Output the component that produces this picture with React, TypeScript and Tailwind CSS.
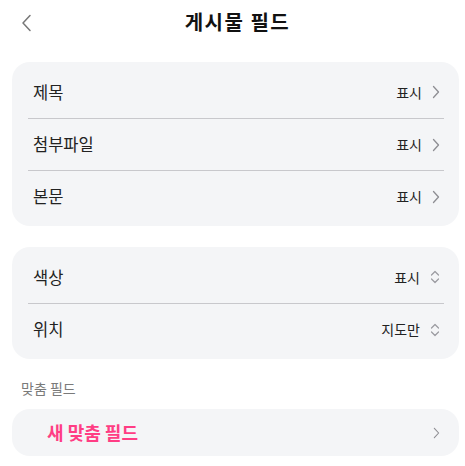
import React from 'react';

const font = { fontFamily: '"Noto Sans CJK KR", "Noto Sans", sans-serif' };

const ChevronRight: React.FC<{ className?: string }> = ({ className }) => (
  <svg viewBox="0 0 8 14" className={className} fill="none" stroke="currentColor" strokeWidth="1.3" strokeLinecap="round" strokeLinejoin="round">
    <path d="M1.5 1.5 L6.5 7 L1.5 12.5" />
  </svg>
);

const ChevronUpDown: React.FC = () => (
  <svg viewBox="0 0 10 14" className="w-[10px] h-[14px] text-[#9a9aa0]" fill="none" stroke="currentColor" strokeWidth="1.2" strokeLinecap="round" strokeLinejoin="round">
    <path d="M1.5 5 L5 1.5 L8.5 5" />
    <path d="M1.5 9 L5 12.5 L8.5 9" />
  </svg>
);

type Row = { label: string; value: string; kind: 'nav' | 'select' };

const Card: React.FC<{ rows: Row[] }> = ({ rows }) => (
  <div className="bg-[#f4f5f7] rounded-[18px] py-1 pl-4 pr-[15px]">
    {rows.map((r, i) => (
      <div
        key={r.label}
        className={`h-[52px] flex items-center justify-between pl-[5px] pr-[4px] ${i > 0 ? 'border-t border-[#c8c8cc]' : ''}`}
      >
        <span className="text-[16.5px] text-[#222]">{r.label}</span>
        <div className="flex items-center gap-[10px]">
          <span className="text-[14px] text-[#222]">{r.value}</span>
          {r.kind === 'nav' ? (
            <ChevronRight className="w-[8px] h-[14px] text-[#8e8e93]" />
          ) : (
            <ChevronUpDown />
          )}
        </div>
      </div>
    ))}
  </div>
);

export default function App() {
  return (
    <div className="w-[465px] h-[466px] bg-white pl-3 pr-[6px] overflow-hidden" style={font}>
      <header className="h-[44px] flex items-center justify-center relative">
        <svg viewBox="0 0 10 18" className="absolute left-[9px] top-[14px] w-[11px] h-[18px] text-[#777]" fill="none" stroke="currentColor" strokeWidth="1.5" strokeLinecap="round" strokeLinejoin="round">
          <path d="M8.5 1.5 L1.5 9 L8.5 16.5" />
        </svg>
        <h1 className="text-[20px] font-bold text-[#111] tracking-[1.5px] pl-[4px]">게시물 필드</h1>
      </header>
      <div className="mt-[18px]">
        <Card
          rows={[
            { label: '제목', value: '표시', kind: 'nav' },
            { label: '첨부파일', value: '표시', kind: 'nav' },
            { label: '본문', value: '표시', kind: 'nav' },
          ]}
        />
      </div>
      <div className="mt-[21px]">
        <Card
          rows={[
            { label: '색상', value: '표시', kind: 'select' },
            { label: '위치', value: '지도만', kind: 'select' },
          ]}
        />
      </div>
      <div className="mt-[20px] pl-[9px] text-[14px] text-[#7a7a7a] leading-[18px]">맞춤 필드</div>
      <div className="mt-[12px] bg-[#f4f5f7] rounded-[18px] h-[47px] flex items-center justify-between pl-[35px] pr-[19px]">
        <span className="text-[18px] font-bold text-[#ff3d84]">새 맞춤 필드</span>
        <ChevronRight className="w-[7px] h-[12px] text-[#8e8e93]" />
      </div>
    </div>
  );
}
